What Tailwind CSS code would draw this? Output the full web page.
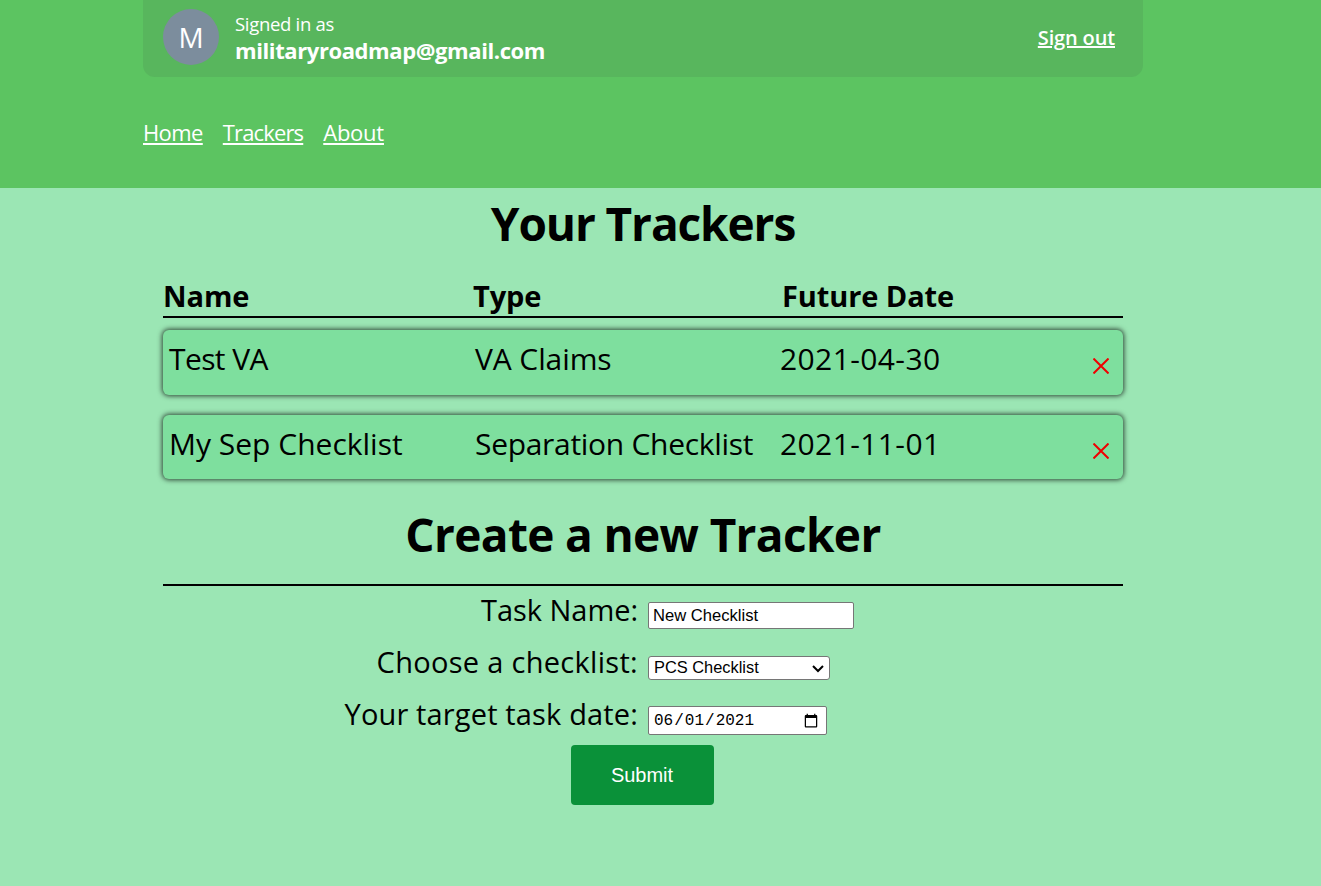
<!DOCTYPE html>
<html lang="en">
<head>
<meta charset="utf-8">
<title>Trackers</title>
<script src="https://cdn.jsdelivr.net/npm/@tailwindcss/browser@4"></script>
</head>
<body class="min-h-[886px] bg-[#9be6b4] text-black font-['Open_Sans','Noto_Sans',sans-serif] overflow-hidden">
<header class="h-[188px] bg-[#5cc461]">
  <div class="w-[1000px] ml-[143px]">
    <div class="h-[77px] bg-[#58b65d] rounded-b-xl flex items-center justify-between pl-5 pr-7">
      <div class="flex items-center gap-4">
        <div class="w-14 h-14 -mt-[3px] rounded-full bg-[#7c8d9d] flex items-center justify-center text-white text-[28px] leading-none">M</div>
        <div class="text-white -translate-y-[1px]">
          <div class="text-[18.5px] leading-[24px] tracking-[-0.3px]">Signed in as</div>
          <div class="text-[22px] leading-[28px] font-bold tracking-[-0.4px]">militaryroadmap@gmail.com</div>
        </div>
      </div>
      <a href="#" class="text-white text-[20px] font-semibold underline tracking-[-0.15px] -translate-y-[1px]">Sign out</a>
    </div>
    <nav class="flex gap-5 mt-[40px] text-white text-[22px] leading-[30px] tracking-[-0.6px]">
      <a href="#" class="underline">Home</a>
      <a href="#" class="underline tracking-[-0.85px]">Trackers</a>
      <a href="#" class="underline tracking-[-0.25px]">About</a>
    </nav>
  </div>
</header>
<main class="w-[960px] ml-[163px]">
  <h1 class="text-center text-[46px] leading-[70px] font-bold tracking-[-1.1px]">Your Trackers</h1>
  <div class="grid grid-cols-[310px_309px_1fr] mt-[16px] h-[44px] border-b-2 border-black text-[29px] leading-[43px] font-bold tracking-[-0.1px]">
    <div>Name</div><div>Type</div><div>Future Date</div>
  </div>
  <div class="relative h-[65px] mt-[12px] bg-[#7edf9e] rounded-md shadow-[0_0_5px_1px_rgba(0,0,0,0.7)] grid grid-cols-[306px_305px_1fr] pl-[6px] text-[30px] leading-[58px]">
    <div class="tracking-[-0.6px]">Test VA</div><div class="tracking-[-0.1px]">VA Claims</div><div class="tracking-[0.4px]">2021-04-30</div>
    <svg class="absolute left-[930px] top-[28px] w-4 h-4" viewBox="0 0 16 16" fill="none" stroke="#f00000" stroke-width="2"><path d="M0.5 0.5L15.5 15.5M15.5 0.5L0.5 15.5"/></svg>
  </div>
  <div class="relative h-[64px] mt-[20px] bg-[#7edf9e] rounded-md shadow-[0_0_5px_1px_rgba(0,0,0,0.7)] grid grid-cols-[306px_305px_1fr] pl-[6px] text-[30px] leading-[58px]">
    <div>My Sep Checklist</div><div class="tracking-[-0.3px]">Separation Checklist</div><div class="tracking-[0.4px]">2021-11-01</div>
    <svg class="absolute left-[930px] top-[28px] w-4 h-4" viewBox="0 0 16 16" fill="none" stroke="#f00000" stroke-width="2"><path d="M0.5 0.5L15.5 15.5M15.5 0.5L0.5 15.5"/></svg>
  </div>
  <h2 class="text-center text-[46px] leading-[70px] font-bold tracking-[-0.65px] mt-[20px]">Create a new Tracker</h2>
  <div class="border-t-2 border-black mt-[15px]"></div>
  <form class="text-[29px] pt-[3px]">
    <div class="grid grid-cols-2 gap-x-[10px] h-[52px] items-center">
      <label class="text-right leading-[48px] -translate-y-[5px] tracking-[-0.05px]">Task Name:</label>
      <input type="text" value="New Checklist" class="w-[206px] h-[27px] bg-white border border-[#767676] rounded-[2px] px-1 pt-[2px] text-[16.6px] font-['Liberation_Sans',sans-serif]">
    </div>
    <div class="grid grid-cols-2 gap-x-[10px] h-[52px] items-center">
      <label class="text-right leading-[48px] -translate-y-[5px] tracking-[0.3px]">Choose a checklist:</label>
      <div class="relative w-[182px] h-[24px] mt-[1px]">
        <select class="block w-full h-full appearance-none bg-white border border-[#767676] rounded-[3px] pl-[5px] pb-[2px] text-[16.4px] leading-[20px] font-['Liberation_Sans',sans-serif]">
          <option>PCS Checklist</option>
        </select>
        <svg class="absolute right-[6px] top-[9px] w-[12px] h-[8px] pointer-events-none" viewBox="0 0 12 8" fill="none" stroke="#000" stroke-width="2"><path d="M1 1L6 6L11 1"/></svg>
      </div>
    </div>
    <div class="grid grid-cols-2 gap-x-[10px] h-[52px] items-center">
      <label class="text-right leading-[48px] -translate-y-[5px] tracking-[0.15px]">Your target task date:</label>
      <input type="date" value="2021-06-01" class="w-[179px] h-[29px] translate-y-[1px] bg-white border border-[#767676] rounded-[2px] pl-1 pr-[5px] pt-[2px] text-[16px] font-['Liberation_Mono',monospace]">
    </div>
    <div class="flex justify-center mr-[2px]">
      <button type="button" class="w-[143px] h-[60px] bg-[#0a9139] text-white rounded text-[20px] font-['Liberation_Sans',sans-serif]">Submit</button>
    </div>
  </form>
</main>
</body>
</html>
